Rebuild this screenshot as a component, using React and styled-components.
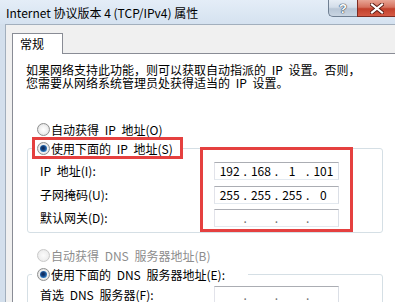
import React from "react";
import styled, { createGlobalStyle } from "styled-components";

const GlobalStyle = createGlobalStyle`
  html, body {
    margin: 0;
    padding: 0;
  }
  body {
    font-family: "Noto Sans CJK SC", "Noto Sans", sans-serif;
    font-size: 12px;
    color: #000;
    background: #f0f0f0;
  }
`;

const Window = styled.div`
  width: 395px;
  height: 302px;
  overflow: hidden;
  display: flex;
  flex-direction: column;
  background: #d3dfec;
`;

const TitleBar = styled.div`
  height: 24px;
  flex-shrink: 0;
  display: flex;
  background: linear-gradient(#e4edf7, #d5e2f0);
`;

const TitleText = styled.div`
  padding-left: 6px;
  line-height: 25px;
  font-size: 12px;
  color: #000;
  white-space: nowrap;
`;

const Controls = styled.div`
  margin-left: auto;
  display: flex;
  align-self: flex-start;
`;

const HelpButton = styled.div`
  width: 29px;
  height: 17px;
  box-sizing: border-box;
  border: 1px solid #6f7f92;
  border-top: none;
  border-right: none;
  border-radius: 0 0 0 5px;
  background: linear-gradient(#e6edf5 0%, #d3dde9 45%, #b8c6d6 55%, #c9d5e2 100%);
  display: flex;
  align-items: center;
  justify-content: center;
  font-family: "Liberation Sans", sans-serif;
  font-weight: bold;
  font-size: 13px;
  color: #fff;
  text-shadow: 0 0 1px #2f3f52, 0 0 1px #2f3f52, 0 0 1px #2f3f52;
`;

const CloseButton = styled.div`
  width: 38px;
  height: 17px;
  box-sizing: border-box;
  border: 1px solid #7d2c22;
  border-top: none;
  border-right: none;
  background: linear-gradient(#e8a595 0%, #d6715e 45%, #c2402b 55%, #d45a45 100%);
  display: flex;
  align-items: center;
  justify-content: center;
`;

const Body = styled.div`
  flex: 1;
  min-height: 0;
  display: flex;
  padding-left: 5px;
`;

const Client = styled.div`
  flex: 1;
  min-width: 0;
  display: flex;
  flex-direction: column;
  background: #f0f0f0;
  border-left: 1px solid #a2afbd;
  border-top: 1px solid #a2afbd;
  padding: 8px 0 0 6px;
`;

const Tab = styled.div`
  width: 51px;
  height: 21px;
  flex-shrink: 0;
  box-sizing: border-box;
  border: 1px solid #898c95;
  border-bottom: none;
  background: #fff;
  margin-bottom: -1px;
  position: relative;
  z-index: 1;
  padding-left: 7px;
  line-height: 20px;
  font-size: 12px;
`;

const Panel = styled.div`
  flex: 1;
  min-height: 0;
  overflow: hidden;
  background: #fff;
  border: 1px solid #898c95;
  border-right: none;
  border-bottom: none;
  padding: 10px 0 0 13px;
  word-spacing: 3px;
`;

const Intro = styled.p`
  margin: 0;
  line-height: 12.5px;
  white-space: nowrap;
`;

const RadioRow = styled.div`
  display: flex;
  align-items: center;
  height: 16px;
  margin-top: ${(p) => p.$top || 0}px;
  padding-left: 11px;
  gap: 1px;
  white-space: nowrap;
  color: ${(p) => (p.$disabled ? "#8d8d8d" : "#000")};
`;

const Radio = styled.span`
  width: 13px;
  height: 13px;
  flex-shrink: 0;
  box-sizing: border-box;
  border-radius: 50%;
  border: 1px solid ${(p) => (p.$disabled ? "#c9c9c9" : "#8e8f8f")};
  background: ${(p) =>
    p.$disabled
      ? "radial-gradient(circle, #fbfbfb 0, #f0f0f0 55%, #e2e2e2 100%)"
      : "radial-gradient(circle, #ffffff 0, #f1f1f1 50%, #cfcfcf 100%)"};
  display: flex;
  align-items: center;
  justify-content: center;
  &::after {
    content: "";
    display: ${(p) => (p.$checked ? "block" : "none")};
    width: 7px;
    height: 7px;
    border-radius: 50%;
    background: radial-gradient(circle at 45% 45%, #0c2550 0, #16407c 35%, #2f80c9 70%, #8ccaf0 100%);
  }
`;

const Group = styled.fieldset`
  margin: 0 0 0 1px;
  padding: 0;
  width: 356px;
  box-sizing: border-box;
  min-width: 0;
  border: 1px solid #d5dfe5;
  border-radius: 3px;
`;

const Legend = styled.legend`
  margin-left: 4px;
  padding: 0 0 0 2px;
  width: ${(p) => p.$width}px;
  height: 22px;
  box-sizing: border-box;
  border: 3px solid ${(p) => (p.$marked ? "#e5403f" : "transparent")};
  display: flex;
  align-items: center;
  gap: 1px;
  white-space: nowrap;
`;

const Rows = styled.div`
  position: relative;
  display: grid;
  grid-template-columns: 174px 125px;
  grid-auto-rows: 18px;
  row-gap: 5.5px;
  align-items: center;
  padding: ${(p) => p.$top}px 0 5px 12px;
`;

const Label = styled.div`
  line-height: 18px;
  white-space: nowrap;
`;

const IpBox = styled.div`
  height: 18px;
  box-sizing: border-box;
  border: 1px solid;
  border-color: #abadb3 #dbdfe6 #e3e9ef #e2e3ea;
  background: #fff;
  display: flex;
  align-items: center;
  padding: 0 1px;
  font-size: 12px;
  line-height: 16px;
  word-spacing: 0;
`;

const Segment = styled.span`
  flex: 1;
  text-align: center;
`;

const Dot = styled.span`
  width: 4px;
  text-align: center;
  color: ${(p) => (p.$faint ? "#6f6f6f" : "#000")};
`;

const Highlight = styled.div`
  position: absolute;
  top: -12px;
  left: 172px;
  width: 153px;
  height: 85px;
  box-sizing: border-box;
  border: 3px solid #e5403f;
  pointer-events: none;
`;

const CloseIcon = () => (
  <svg width="14" height="11" viewBox="0 0 14 11">
    <path d="M2 1.5 L12 9.5 M12 1.5 L2 9.5" stroke="#5a1a12" strokeWidth="4" strokeLinecap="square" />
    <path d="M2 1.5 L12 9.5 M12 1.5 L2 9.5" stroke="#ffffff" strokeWidth="2.2" strokeLinecap="square" />
  </svg>
);

const IpField = ({ parts }) => (
  <IpBox>
    {parts.map((p, i) => (
      <React.Fragment key={i}>
        {i > 0 && <Dot $faint={!p}>.</Dot>}
        <Segment>{p}</Segment>
      </React.Fragment>
    ))}
  </IpBox>
);

export default function App() {
  return (
    <>
      <GlobalStyle />
      <Window>
        <TitleBar>
          <TitleText>Internet 协议版本 4 (TCP/IPv4) 属性</TitleText>
          <Controls>
            <HelpButton>?</HelpButton>
            <CloseButton>
              <CloseIcon />
            </CloseButton>
          </Controls>
        </TitleBar>
        <Body>
          <Client>
            <Tab>常规</Tab>
            <Panel>
              <Intro>
                如果网络支持此功能，则可以获取自动指派的 IP 设置。否则，
                <br />
                您需要从网络系统管理员处获得适当的 IP 设置。
              </Intro>

              <RadioRow $top={32}>
                <Radio />
                自动获得 IP 地址(O)
              </RadioRow>

              <Group>
                <Legend $width={151} $marked>
                  <Radio $checked />
                  使用下面的 IP 地址(S)
                </Legend>
                <Rows $top={3}>
                  <Label>IP 地址(I):</Label>
                  <IpField parts={["192", "168", "1", "101"]} />
                  <Label>子网掩码(U):</Label>
                  <IpField parts={["255", "255", "255", "0"]} />
                  <Label>默认网关(D):</Label>
                  <IpField parts={["", "", "", ""]} />
                  <Highlight />
                </Rows>
              </Group>

              <RadioRow $top={14} $disabled>
                <Radio $disabled />
                自动获得 DNS 服务器地址(B)
              </RadioRow>

              <Group>
                <Legend $width={216}>
                  <Radio $checked />
                  使用下面的 DNS 服务器地址(E):
                </Legend>
                <Rows $top={1}>
                  <Label>首选 DNS 服务器(F):</Label>
                  <IpField parts={["", "", "", ""]} />
                </Rows>
              </Group>
            </Panel>
          </Client>
        </Body>
      </Window>
    </>
  );
}
